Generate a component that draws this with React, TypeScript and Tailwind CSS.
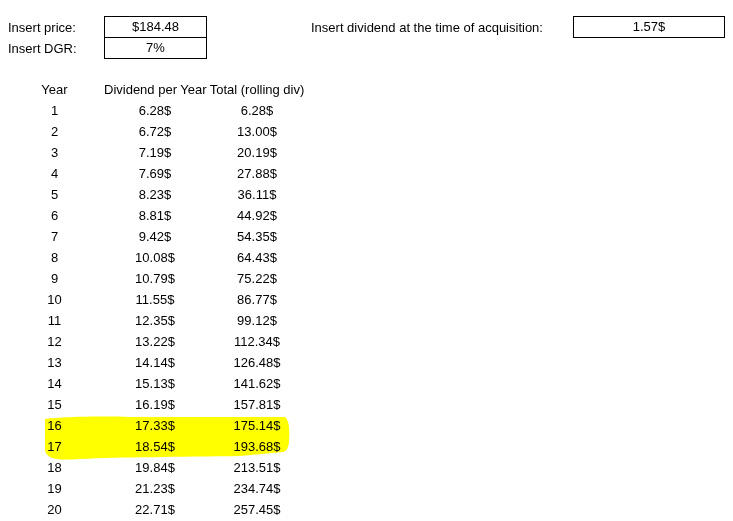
const rows: [number, string, string][] = [
  [1, '6.28$', '6.28$'],
  [2, '6.72$', '13.00$'],
  [3, '7.19$', '20.19$'],
  [4, '7.69$', '27.88$'],
  [5, '8.23$', '36.11$'],
  [6, '8.81$', '44.92$'],
  [7, '9.42$', '54.35$'],
  [8, '10.08$', '64.43$'],
  [9, '10.79$', '75.22$'],
  [10, '11.55$', '86.77$'],
  [11, '12.35$', '99.12$'],
  [12, '13.22$', '112.34$'],
  [13, '14.14$', '126.48$'],
  [14, '15.13$', '141.62$'],
  [15, '16.19$', '157.81$'],
  [16, '17.33$', '175.14$'],
  [17, '18.54$', '193.68$'],
  [18, '19.84$', '213.51$'],
  [19, '21.23$', '234.74$'],
  [20, '22.71$', '257.45$'],
]

export default function App() {
  return (
    <div
      className="relative w-[733px] h-[521px] overflow-hidden bg-white text-black text-[13px] leading-[21px]"
      style={{ fontFamily: '"Liberation Sans", Arial, sans-serif' }}
    >
      {/* Inputs */}
      <div className="pt-[16px]">
        <div className="flex h-[22px] items-center">
          <div className="w-[104px] pl-[8px]">Insert price:</div>
          <div className="w-[103px] h-[22px] border border-black text-center leading-[20px]">$184.48</div>
          <div className="w-[104px]" />
          <div className="w-[262px]">Insert dividend at the time of acquisition:</div>
          <div className="w-[152px] h-[22px] border border-black text-center leading-[20px]">1.57$</div>
        </div>
        <div className="flex h-[21px] items-center">
          <div className="w-[104px] pl-[8px]">Insert DGR:</div>
          <div className="w-[103px] h-[21px] border-x border-b border-black text-center leading-[20px]">7%</div>
        </div>
      </div>

      {/* Table */}
      <div className="mt-[20px] pl-[5px]">
        <div className="flex h-[21px]">
          <div className="w-[99px] text-center">Year</div>
          <div className="w-[102px] text-center whitespace-nowrap">Dividend per Year</div>
          <div className="w-[102px] text-center whitespace-nowrap">Total (rolling div)</div>
        </div>
        {rows.map(([year, div, total]) => (
          <div key={year} className="flex h-[21px]">
            <div className="w-[99px] text-center">{year}</div>
            <div className="w-[102px] text-center">{div}</div>
            <div className="w-[102px] text-center">{total}</div>
          </div>
        ))}
      </div>

      {/* Marker highlight over rows 16 and 17 */}
      <svg
        className="absolute left-[43px] top-[414px] w-[250px] h-[50px] mix-blend-multiply pointer-events-none"
        viewBox="0 0 250 50"
      >
        <path
          d="M2,5 C17,3 57,2 87,3 L242,3 C246,6 247,16 246,26 C246,33 244,37 240,38 L197,42 C137,43 77,43 37,45 C22,46 12,46 7,43 C3,40 2,38 2,35 Z"
          fill="#ffff00"
        />
      </svg>
    </div>
  )
}
